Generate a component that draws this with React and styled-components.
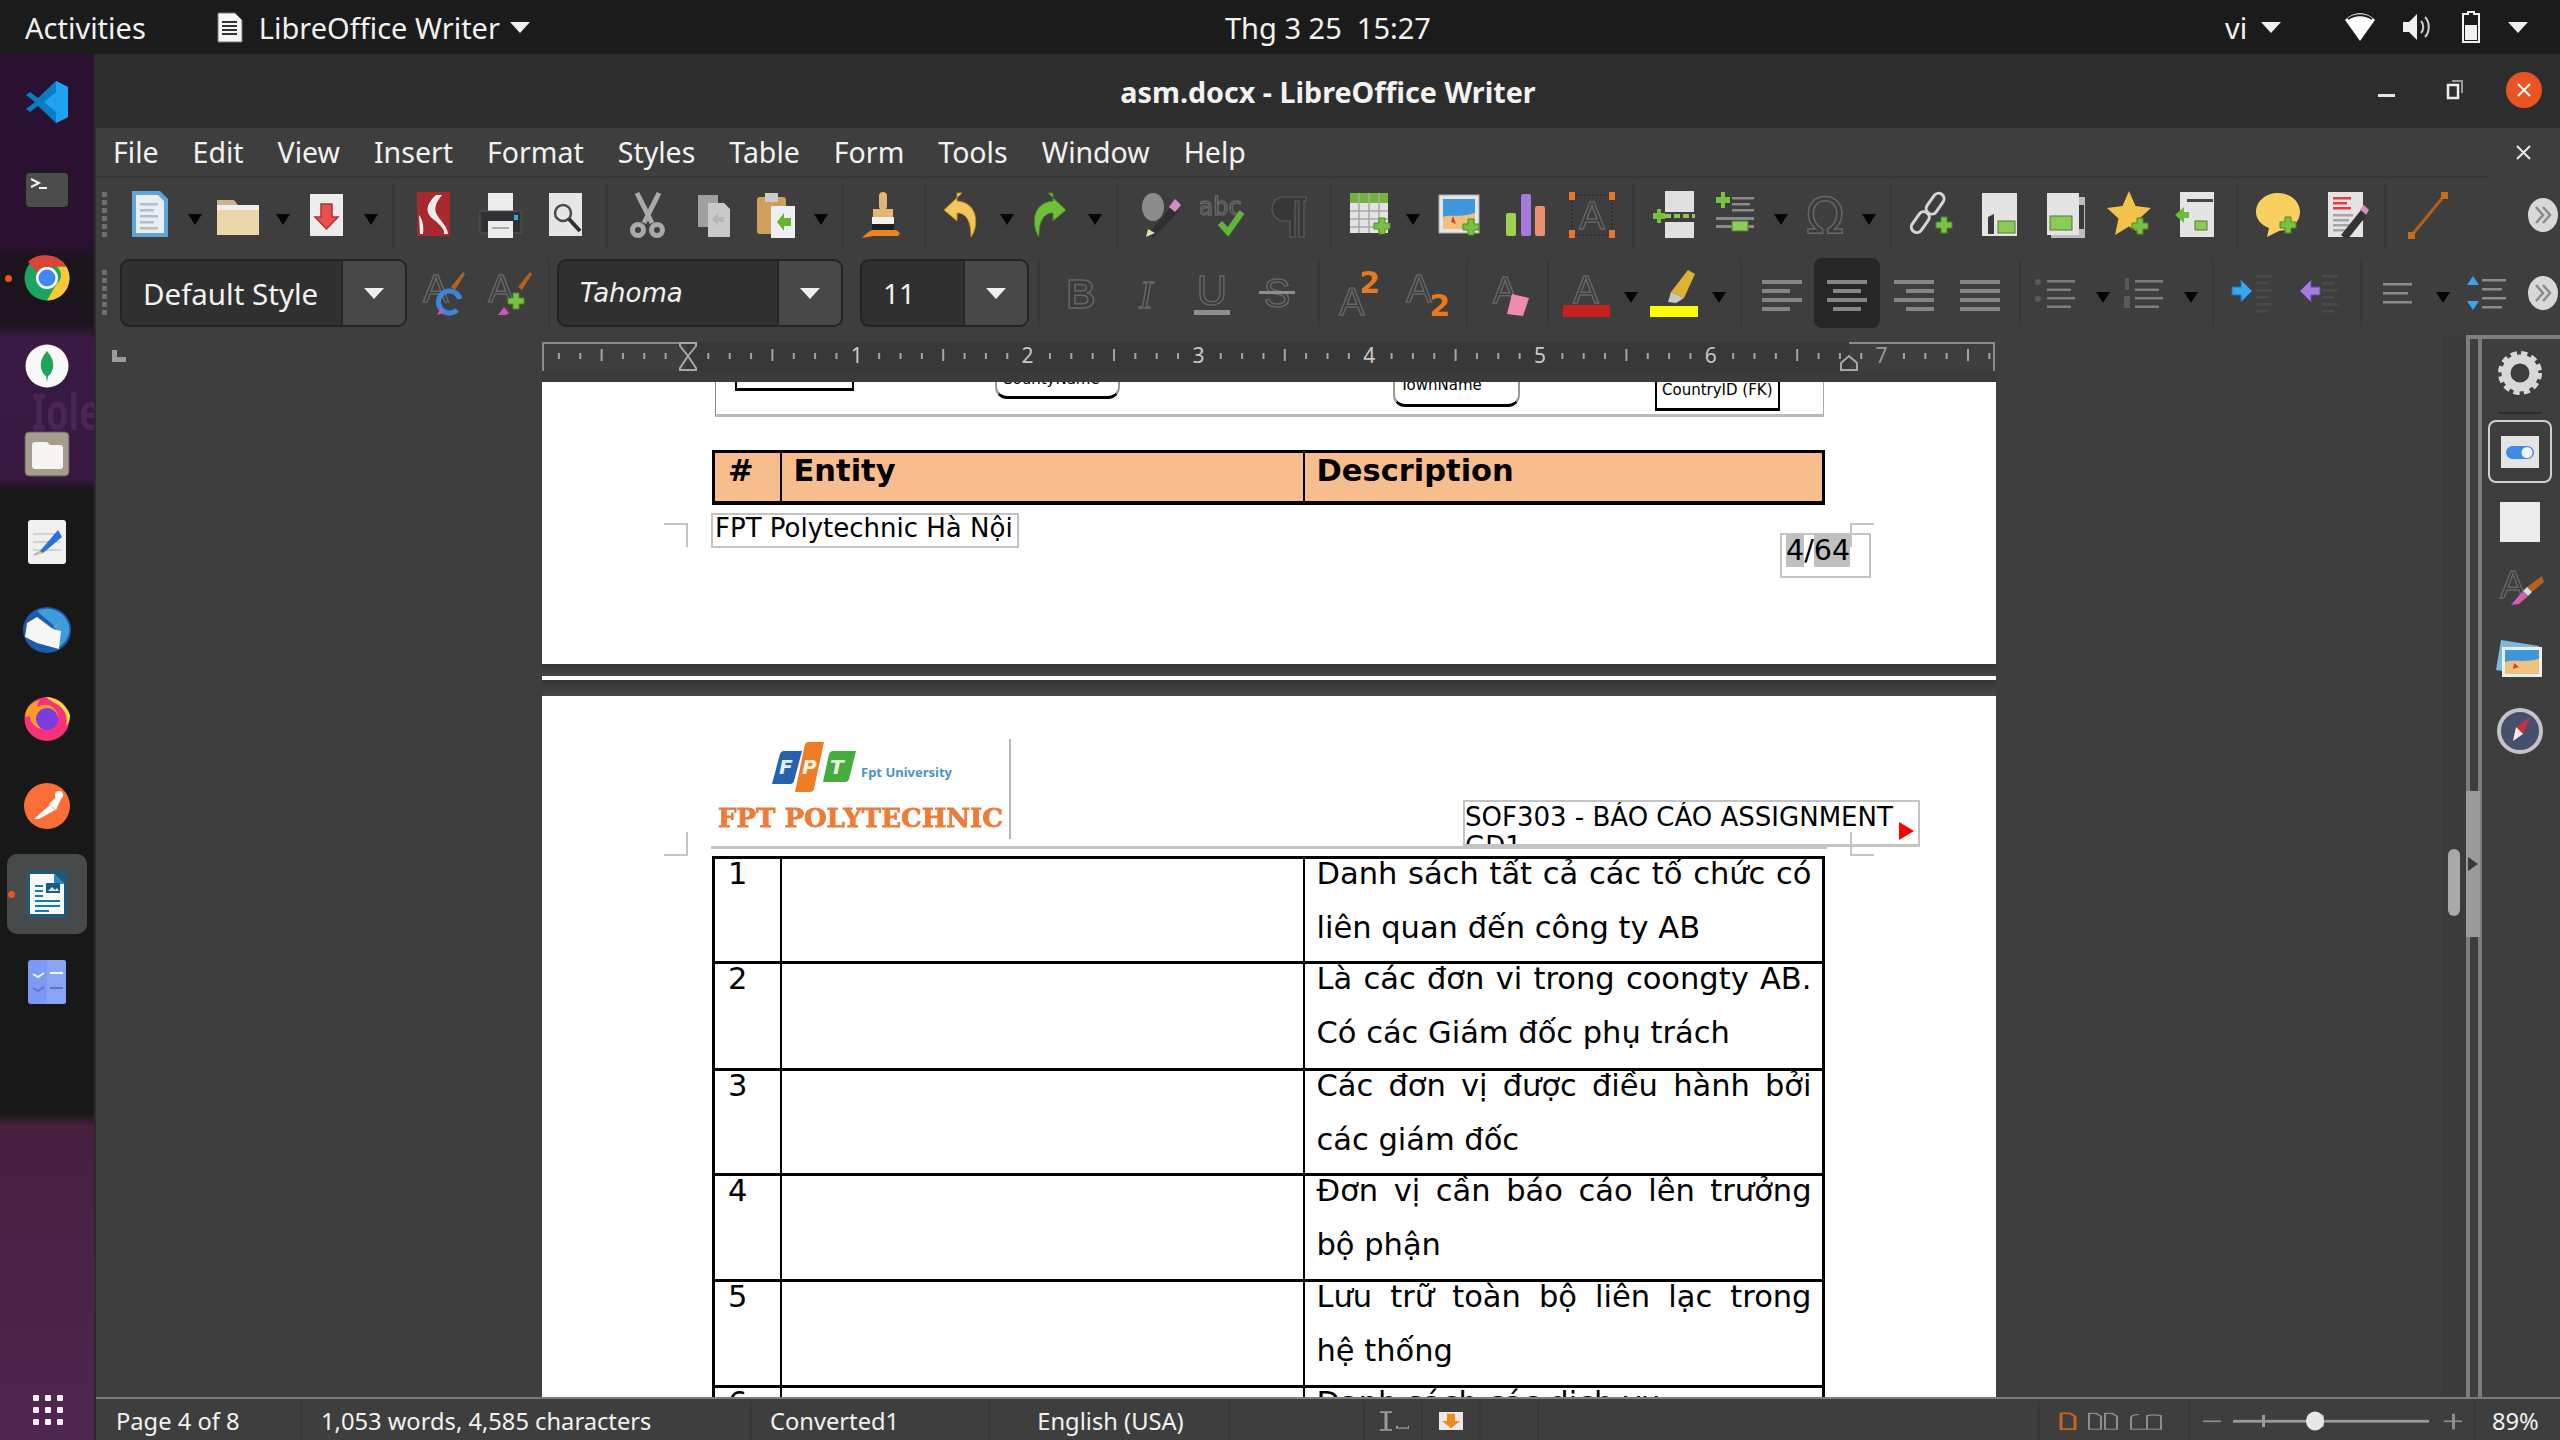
import React from "react";
import styled, { createGlobalStyle } from "styled-components";

const UI = `"Noto Sans", "Open Sans", sans-serif`;
const DOC = `"DejaVu Sans", sans-serif`;
const ARIAL = `"Liberation Sans", sans-serif`;

const Global = createGlobalStyle`
  html, body { margin: 0; padding: 0; background: #1b1b1b; }
  * { box-sizing: border-box; }
`;

const Screen = styled.div`
  width: 2560px;
  height: 1440px;
  display: flex;
  flex-direction: column;
  overflow: hidden;
  font-family: ${UI};
  color: #f2f2f2;
`;

/* gnome top bar */
const TopBar = styled.header`
  height: 54px;
  flex: none;
  background: #1b1b1b;
  display: flex;
  align-items: center;
  position: relative;
  font-size: 29px;
  padding-left: 25px;
`;
const TopText = styled.span`
  margin-left: ${(p) => p.$ml || 0}px;
  white-space: nowrap;
`;
const Clock = styled.span`
  position: absolute;
  left: 1225px;
  white-space: pre;
`;
const Tri = styled.i`
  display: block;
  flex: none;
  margin-left: ${(p) => p.$ml || 0}px;
  border-left: ${(p) => p.$s || 10}px solid transparent;
  border-right: ${(p) => p.$s || 10}px solid transparent;
  border-top: ${(p) => (p.$s || 10) + 1}px solid ${(p) => p.$c || "#f0f0f0"};
`;
const TraySvg = styled.svg`
  flex: none;
  margin-left: ${(p) => p.$ml || 0}px;
  margin-top: ${(p) => p.$mt || 0}px;
`;

const Desktop = styled.div`
  flex: 1;
  display: flex;
  min-height: 0;
`;

/* launcher */
const Dock = styled.nav`
  width: 96px;
  flex: none;
  position: relative;
  overflow: hidden;
  border-right: 2px solid #2a2a2a;
  background: linear-gradient(
    180deg,
    #2b1131 0,
    #2b1131 190px,
    #1c141c 205px,
    #1c141c 270px,
    #3a1a44 285px,
    #361840 425px,
    #181818 436px,
    #181818 1060px,
    #47203f 1072px,
    #4f2650 1386px
  );
  display: flex;
  flex-direction: column;
  align-items: center;
  padding-top: 8px;
`;
const DockWatermark = styled.span`
  position: absolute;
  left: 32px;
  top: 332px;
  font-size: 50px;
  line-height: 50px;
  font-weight: 700;
  color: rgba(130, 80, 140, 0.24);
  transform: scaleX(0.72);
  transform-origin: left center;
`;
const DockItem = styled.div`
  width: 80px;
  height: 80px;
  margin-bottom: 8px;
  flex: none;
  display: flex;
  align-items: center;
  justify-content: center;
  border-radius: 10px;
  position: relative;
  background: ${(p) => (p.$active ? "#474a4a" : "transparent")};
`;
const RunDot = styled.b`
  position: absolute;
  left: ${(p) => p.$x || -2}px;
  top: 37px;
  width: 7px;
  height: 7px;
  border-radius: 50%;
  background: #e95420;
`;
const AppsGrid = styled.div`
  position: absolute;
  left: 33px;
  bottom: 15px;
  width: 30px;
  display: grid;
  grid-template-columns: repeat(3, 6px);
  gap: 6px;
  span {
    width: 6px;
    height: 6px;
    border-radius: 1px;
    background: #f4f0f4;
  }
`;

const Win = styled.main`
  flex: 1;
  min-width: 0;
  display: flex;
  flex-direction: column;
  background: #3e3e3e;
`;
const TitleBar = styled.div`
  height: 74px;
  flex: none;
  background: #2d2d2d;
  position: relative;
  display: flex;
  align-items: center;
  justify-content: center;
  font-weight: 700;
  font-size: 28.7px;
`;
const WinButtons = styled.div`
  position: absolute;
  right: 18px;
  top: 18px;
  display: flex;
  align-items: center;
`;
const CloseBtn = styled.div`
  width: 36px;
  height: 36px;
  margin-left: 42px;
  border-radius: 50%;
  background: #e95420;
  display: flex;
  align-items: center;
  justify-content: center;
`;
const MenuBar = styled.div`
  height: 50px;
  flex: none;
  display: flex;
  align-items: center;
  padding: 0 0 2px 17px;
  font-size: 28.5px;
  background: #3e3e3e;
  position: relative;
  &::after {
    content: "";
    position: absolute;
    left: 0;
    right: 72px;
    bottom: 0;
    height: 2px;
    background: #363636;
  }
`;
const MenuItem = styled.span`
  margin-right: 34px;
  white-space: nowrap;
`;
const MenuClose = styled.svg`
  position: absolute;
  right: 29px;
  top: 17px;
`;

const Toolbar = styled.div`
  height: ${(p) => p.$h}px;
  flex: none;
  display: flex;
  align-items: center;
  padding: 0 2px ${(p) => p.$pb}px 6px;
`;
const Grip = styled.div`
  width: 5px;
  height: 46px;
  flex: none;
  background: repeating-linear-gradient(180deg, #6e6e6e 0 5px, transparent 5px 8px);
`;
const ToolSep = styled.div`
  width: 2px;
  height: 66px;
  flex: none;
  background: #383838;
  margin-left: ${(p) => p.$gap}px;
`;
const ToolArrow = styled(Tri)`
  border-left-width: 7px;
  border-right-width: 7px;
  border-top-width: 11px;
  border-top-color: #050505;
  margin-top: 8px;
  margin-left: ${(p) => p.$gap}px;
`;
const ToolIcon = styled.svg`
  width: 48px;
  height: 48px;
  flex: none;
  margin-left: ${(p) => p.$gap}px;
  filter: blur(0.4px);
`;
const ActiveTool = styled.div`
  width: 66px;
  height: 70px;
  flex: none;
  margin-left: ${(p) => p.$gap}px;
  background: #262626;
  border-radius: 8px;
  display: flex;
  align-items: center;
  justify-content: center;
`;
const MoreBtn = styled.svg`
  margin-left: auto;
  flex: none;
`;
const Combo = styled.div`
  width: ${(p) => p.$w}px;
  height: 68px;
  flex: none;
  margin-left: ${(p) => p.$gap}px;
  display: flex;
  background: #303030;
  border: 2px solid #232323;
  border-radius: 9px;
  overflow: hidden;
`;
const ComboText = styled.div`
  flex: 1;
  display: flex;
  align-items: center;
  padding-left: 21px;
  font-size: ${(p) => p.$size || 29.5}px;
  font-style: ${(p) => (p.$italic ? "italic" : "normal")};
  font-family: ${(p) => (p.$italic ? DOC : UI)};
  white-space: nowrap;
`;
const ComboBtn = styled.div`
  width: 64px;
  flex: none;
  background: #484848;
  border-left: 2px solid #262626;
  display: flex;
  align-items: center;
  justify-content: center;
`;

const Body = styled.div`
  flex: 1;
  min-height: 0;
  display: flex;
`;
const Workspace = styled.section`
  flex: 1;
  min-width: 0;
  display: flex;
  flex-direction: column;
  align-items: center;
  overflow: hidden;
  padding-top: 7px;
  position: relative;
`;
const TabMark = styled.div`
  position: absolute;
  left: 16px;
  top: 15px;
  width: 14px;
  height: 12px;
  border-left: 5px solid #9c9c9c;
  border-bottom: 5px solid #9c9c9c;
`;
const RulerSvg = styled.svg`
  flex: none;
  display: block;
`;
const RulerGap = styled.div`
  height: 11px;
  flex: none;
  width: 1454px;
  background: #3a3a3a;
`;
const Sheet = styled.article`
  width: 1454px;
  flex: none;
  position: relative;
  background: #fff;
  color: #000;
  font-family: ${DOC};
  overflow: hidden;
`;
const FirstSheet = styled(Sheet)`
  height: 282px;
`;
const SecondSheet = styled(Sheet)`
  flex: 1;
  min-height: 0;
`;
const PageGap = styled.div`
  width: 1454px;
  height: ${(p) => p.$h}px;
  flex: none;
  background: ${(p) => (p.$white ? "#fff" : "linear-gradient(180deg,#353535,#474747)")};
`;
const DiagramFrame = styled.div`
  margin-left: 173px;
  width: 1109px;
  height: 35px;
  border-left: 1px solid #888;
  border-right: 1px solid #aaa;
  border-bottom: 3px solid #bbb;
  display: flex;
  align-items: flex-start;
  font-size: 15px;
  padding-left: 19px;
`;
const Entity = styled.div`
  width: ${(p) => p.$w}px;
  height: ${(p) => p.$h}px;
  flex: none;
  margin-left: ${(p) => p.$ml || 0}px;
  border: 2px solid ${(p) => (p.$soft ? "#999" : "#000")};
  border-top: 0;
  border-bottom: 3px solid #000;
  border-radius: ${(p) => (p.$soft ? "0 0 12px 12px" : "0")};
  display: flex;
  align-items: flex-end;
  padding: 0 0 ${(p) => p.$pb || 0}px 5px;
  line-height: 16px;
  white-space: nowrap;
`;
const DocTable = styled.table`
  width: 1113px;
  margin-left: 170px;
  margin-top: ${(p) => p.$mt}px;
  border-collapse: collapse;
  table-layout: fixed;
  font-size: 30.5px;
  td {
    border-left: 2px solid #000;
    border-right: 2px solid #000;
    padding: 0;
    vertical-align: top;
  }
  td:first-child {
    border-left-width: 3px;
    padding-left: 13px;
    line-height: 30px;
  }
  td:last-child {
    border-right-width: 3px;
  }
`;
const HeadRow = styled.tr`
  height: 51px;
  background: #f8bd8d;
  border-top: 3px solid #000;
  border-bottom: 4px solid #000;
  font-weight: 700;
  td {
    line-height: 30px;
    padding: 3px 0 0 12px;
  }
  td:first-child {
    padding-left: 13px;
  }
`;
const DataRow = styled.tr`
  height: ${(p) => p.$h}px;
  border-top: 3px solid #000;
`;
const Desc = styled.div`
  width: 495px;
  margin-left: 12px;
  line-height: 54px;
  margin-top: -12px;
  text-align: justify;
`;
const FootRow = styled.div`
  display: flex;
  justify-content: space-between;
  align-items: flex-start;
  margin: 8px 125px 0 169px;
`;
const FootBox = styled.div`
  height: 35px;
  padding: 0 4px 0 2px;
  border: 2px solid #c4c4c4;
  font-size: 26px;
  line-height: 27px;
  white-space: nowrap;
`;
const PageNoBox = styled.div`
  width: 91px;
  height: 45px;
  margin-top: 20px;
  padding-left: 4px;
  border: 2px solid #c4c4c4;
  font-size: 28.5px;
  line-height: 32px;
  white-space: nowrap;
  span {
    background: #c0c0c0;
  }
`;
const Crop = styled.i`
  position: absolute;
  width: 24px;
  height: 24px;
  left: ${(p) => p.$x}px;
  top: ${(p) => p.$y}px;
  border-style: solid;
  border-color: #c4c4c4;
  border-width: ${(p) => p.$b};
`;
const PageHead = styled.div`
  height: 153px;
  width: 1116px;
  margin-left: 169px;
  padding-top: 44px;
  border-bottom: 3px solid #c4c4c4;
  display: flex;
  align-items: flex-end;
  position: relative;
`;
const LogoBox = styled.div`
  width: 300px;
  height: 100px;
  margin-bottom: 7px;
  border-right: 2px solid #b8b8b8;
  flex: none;
  display: flex;
  flex-direction: column;
`;
const LogoMark = styled.svg`
  flex: none;
  margin: 2px 0 0 56px;
`;
const LogoWord = styled.div`
  font-family: "DejaVu Serif", serif;
  font-weight: 700;
  font-size: 26px;
  line-height: 30px;
  margin: 4px 0 0 7px;
  color: #ee7b38;
  -webkit-text-stroke: 0.8px #ee7b38;
  white-space: nowrap;
  filter: blur(0.5px);
`;
const HeadBox = styled.div`
  position: absolute;
  left: 752px;
  top: 104px;
  width: 457px;
  height: 47px;
  padding-top: 1px;
  border: 2px solid #c4c4c4;
  border-bottom-width: 3px;
  font-size: 26px;
  line-height: 29px;
  overflow: hidden;
`;
const MoreMark = styled.i`
  position: absolute;
  right: 4px;
  top: 20px;
  border-top: 9px solid transparent;
  border-bottom: 9px solid transparent;
  border-left: 15px solid #f00;
`;

const ScrollStrip = styled.div`
  width: 24px;
  flex: none;
  background: #3b3b3b;
  padding: 514px 0 0 6px;
`;
const Thumb = styled.div`
  width: 12px;
  height: 67px;
  border-radius: 6px;
  background: #a9a9a9;
`;
const Deck = styled.aside`
  width: 94px;
  flex: none;
  position: relative;
  border-top: 4px solid #7e7e7e;
  border-left: 4px solid #7e7e7e;
  padding-left: 8px;
  display: flex;
`;
const DeckColumn = styled.div`
  flex: 1;
  border-left: 4px solid #7e7e7e;
  display: flex;
  flex-direction: column;
  align-items: center;
  padding: 12px 2px 0 0;
`;
const DeckIcon = styled.svg`
  flex: none;
  margin-top: ${(p) => p.$mt || 0}px;
  filter: blur(0.4px);
`;
const DeckRule = styled.div`
  width: 44px;
  height: 2px;
  flex: none;
  margin-top: 17px;
  background: #2c2c2c;
`;
const DeckSelected = styled.div`
  width: 64px;
  height: 63px;
  flex: none;
  margin-top: 6px;
  border: 2px solid #cfcfcf;
  border-radius: 8px;
  display: flex;
  align-items: center;
  justify-content: center;
`;
const Collapser = styled.div`
  position: absolute;
  left: -4px;
  top: 452px;
  width: 14px;
  height: 146px;
  background: #9b9b9b;
  display: flex;
  align-items: center;
  justify-content: center;
  &::after {
    content: "";
    border-top: 7px solid transparent;
    border-bottom: 7px solid transparent;
    border-left: 10px solid #3a3a3a;
  }
`;

const StatusBar = styled.footer`
  height: 43px;
  flex: none;
  border-top: 2px solid #7c7c7c;
  display: flex;
  font-size: 23.7px;
  padding-top: 2px;
`;
const StatusCell = styled.div`
  width: ${(p) => p.$w}px;
  flex: none;
  display: flex;
  align-items: center;
  justify-content: ${(p) => (p.$center ? "center" : "flex-start")};
  padding-left: ${(p) => p.$pl || 0}px;
  border-right: 2px solid ${(p) => (p.$nosep ? "transparent" : "#383838")};
  white-space: nowrap;
`;

const Plus = ({ x = 30, y = 30 }) => (
  <path
    d={`M${x + 5} ${y}h6v5h5v6h-5v5h-6v-5h-5v-6h5z`}
    fill="#7ac143"
    stroke="#4d8a22"
    strokeWidth="1"
  />
);
const Lines = ({ x, y, n = 5, w = 20, c = "#bdbdbd", step = 6 }) => (
  <>
    {Array.from({ length: n }).map((_, i) => (
      <rect key={i} x={x} y={y + i * step} width={i % 2 ? w - 4 : w} height="2.5" fill={c} />
    ))}
  </>
);
const Glyph = ({ t, x = 24, y = 40, s = 38, c = "#3b3b3b", st = "#666", it, fam = DOC, w = 400 }) => (
  <text
    x={x}
    y={y}
    fontSize={s}
    fontFamily={fam}
    fontStyle={it ? "italic" : "normal"}
    fontWeight={w}
    textAnchor="middle"
    fill={c}
    stroke={st}
    strokeWidth="1.5"
  >
    {t}
  </text>
);
const AlignBars = ({ mode }) => {
  const rows = [40, 28, 40, 28];
  return (
    <>
      {rows.map((w, i) => {
        const full = mode === "justify" ? 40 : w;
        const x = mode === "left" ? 4 : mode === "right" ? 44 - full : mode === "center" ? 24 - full / 2 : 4;
        return <rect key={i} x={x} y={11 + i * 9} width={full} height="4" fill="#858585" />;
      })}
    </>
  );
};

const ICONS = {
  newdoc: (
    <>
      <path d="M6 0h28l8 8v38H6z" fill="#5fa5dc" />
      <path d="M10 4h22l6 6v32H10z" fill="#e9eef2" />
      <Lines x={14} y={12} n={5} w={18} c="#b6bcc2" />
    </>
  ),
  open: (
    <>
      <path d="M3 9h17l4 5h21v30H3z" fill="#c9b48f" />
      <rect x="3" y="14" width="42" height="5" fill="#f2f0ea" />
      <path d="M3 19h42v25H3z" fill="#ecd6ac" />
    </>
  ),
  save: (
    <>
      <rect x="8" y="3" width="33" height="42" fill="#ececec" />
      <path d="M19 13h11v13h6L24.500 38 13 26h6z" fill="#e4534f" stroke="#b03030" strokeWidth="1.500" />
    </>
  ),
  pdf: (
    <>
      <rect x="8" y="1" width="33" height="44" fill="#a8282d" />
      <path d="M27 4c-9 8-12 17-3 24s12 12 11 15h4C38 34 31 30 27 22c-2-6 1-12 6-18z" fill="#ededed" />
      <path d="M10 24c3 3 5 10 4 19h-3z" fill="#ededed" />
    </>
  ),
  printer: (
    <>
      <rect x="12" y="2" width="25" height="18" fill="#ececec" />
      <path d="M4 20h41v22H4z" fill="#2e3033" stroke="#555" />
      <rect x="12" y="30" width="25" height="17" fill="#ececec" />
      <rect x="16" y="36" width="17" height="2" fill="#aaa" />
      <rect x="38" y="24" width="4" height="5" fill="#39a7e0" />
    </>
  ),
  preview: (
    <>
      <rect x="7" y="2" width="33" height="43" fill="#e6e6e6" />
      <circle cx="21" cy="22" r="8" fill="none" stroke="#4a4a4a" strokeWidth="2.500" />
      <path d="M27 28l11 12" stroke="#2f2f2f" strokeWidth="4" />
    </>
  ),
  cut: (
    <g fill="none" stroke="#a9a9a9" strokeWidth="5">
      <path d="M13 2l15 30M35 2L20 32" />
      <circle cx="14" cy="39" r="5.500" />
      <circle cx="33" cy="39" r="5.500" />
    </g>
  ),
  copy: (
    <>
      <path d="M8 4h20v32H8z" fill="#a0a0a0" />
      <path d="M18 12h16l6 6v28H18z" fill="#c9c9c9" />
      <path d="M22 28l6-6v4h6v5h-6v4z" fill="#b5b5b5" />
    </>
  ),
  paste: (
    <>
      <rect x="6" y="6" width="29" height="37" rx="3" fill="#cfa05c" />
      <rect x="14" y="2" width="13" height="9" fill="#ccc" />
      <rect x="20" y="15" width="24" height="32" fill="#efefef" />
      <path d="M26 31l7-9v5h7v8h-7v5z" fill="#65b32e" />
    </>
  ),
  brush: (
    <>
      <rect x="20" y="1" width="8" height="18" rx="4" fill="#e2b774" />
      <rect x="14" y="18" width="20" height="8" fill="#e2b774" />
      <rect x="13" y="26" width="22" height="7" fill="#f2f2f2" />
      <path d="M13 33h22v6H13z" fill="#1e1e1e" />
      <path d="M3 47c3-3 7-8 12-8h22l4 3-2 3H14z" fill="#e8851e" />
    </>
  ),
  undo: (
    <path
      d="M20 1L2 18l13 11v-8c8 0 14 6 14 24 7-9 9-34-14-36V1z"
      fill="#f4c75a"
      stroke="#b98b22"
      transform="translate(3 1)"
    />
  ),
  redo: (
    <path
      d="M28 1l18 17-13 11v-8c-8 0-14 6-14 24-7-9-9-34 14-36V1z"
      fill="#6fbf3a"
      stroke="#417f1a"
      transform="translate(-3 1)"
    />
  ),
  find: (
    <>
      <ellipse cx="16" cy="16" rx="11" ry="14" fill="#8c8c8c" />
      <path d="M10 44l24-28 7 5-24 25z" fill="#2f2f2f" />
      <path d="M32 16l6-8 6 6-6 7z" fill="#d88bc4" />
      <path d="M9 46l2-8 7 4z" fill="#e4df9a" />
    </>
  ),
  spell: (
    <>
      <Glyph t="abc" x={20} y={24} s={24} />
      <path d="M20 32l8 9 14-20" fill="none" stroke="#5fb535" strokeWidth="6" />
    </>
  ),
  pilcrow: (
    <path
      d="M40 6H18a11 11 0 000 24h6v16h5V10h4v36h5V10h2z"
      fill="#373737"
      stroke="#555"
      strokeWidth="1.500"
    />
  ),
  table: (
    <>
      <rect x="4" y="2" width="38" height="40" fill="#e4e4e4" />
      <rect x="4" y="2" width="38" height="10" fill="#75b43a" />
      <g stroke="#a8a8a8" strokeWidth="1.500">
        <path d="M13 2v40M23 2v40M33 2v40M4 20h38M4 28h38M4 36h38" />
      </g>
      <Plus x={28} y={27} />
    </>
  ),
  image: (
    <>
      <rect x="3" y="4" width="40" height="38" fill="#e6e6e6" stroke="#aaa" />
      <rect x="7" y="8" width="32" height="30" fill="#3d97da" />
      <path d="M7 26c8-3 16 1 32-4v16H7z" fill="#eec27d" />
      <path d="M17 25l3 8-5-2z" fill="#d8432b" />
      <Plus x={27} y={28} />
    </>
  ),
  chart: (
    <>
      <rect x="4" y="22" width="10" height="23" rx="2" fill="#9ed24f" />
      <rect x="19" y="3" width="10" height="42" rx="2" fill="#a57ad8" />
      <rect x="33" y="15" width="10" height="30" rx="2" fill="#ec9072" />
    </>
  ),
  textbox: (
    <>
      <rect x="4" y="4" width="40" height="40" fill="none" stroke="#2e2e2e" strokeDasharray="2 2" strokeWidth="2" />
      <Glyph t="A" x={24} y={38} s={38} />
      <g fill="#e8762a">
        <rect x="1" y="1" width="6" height="8" />
        <rect x="41" y="1" width="6" height="8" />
        <rect x="1" y="39" width="6" height="8" />
        <rect x="41" y="39" width="6" height="8" />
      </g>
    </>
  ),
  pagebreak: (
    <>
      <rect x="16" y="0" width="29" height="21" fill="#e0e0e0" />
      <rect x="16" y="31" width="29" height="16" fill="#e0e0e0" />
      <path d="M16 25h30" stroke="#8cc657" strokeWidth="4" strokeDasharray="6 3" />
      <path d="M4 22h4v-4h4v4h4v6h-4v4H8v-4H4z" fill="#7ac143" />
    </>
  ),
  field: (
    <>
      <path d="M9 1h4v5h5v6h-5v5H9v-5H4V6h5z" fill="#7ac143" />
      <Lines x={20} y={6} n={3} w={22} c="#8a8a8a" />
      <rect x="4" y="26" width="38" height="3" fill="#8a8a8a" />
      <rect x="4" y="34" width="38" height="3" fill="#8a8a8a" />
      <rect x="20" y="30" width="16" height="10" fill="#8ccb5a" stroke="#4c7c28" />
    </>
  ),
  omega: <Glyph t="Ω" x={24} y={42} s={50} />,
  link: (
    <>
      <g fill="none" stroke="#d6d6d6" strokeWidth="3">
        <rect x="20" y="1" width="11" height="23" rx="5.500" transform="rotate(35 25 12)" />
        <rect x="5" y="20" width="11" height="23" rx="5.500" transform="rotate(35 11 31)" />
      </g>
      <Plus x={26} y={26} />
    </>
  ),
  footnote: (
    <>
      <rect x="7" y="2" width="35" height="43" fill="#e4e4e4" />
      <path d="M13 26l6-3v20h-6z" fill="#3a3a3a" />
      <rect x="23" y="30" width="17" height="12" fill="#8ccb5a" stroke="#4c7c28" />
    </>
  ),
  endnote: (
    <>
      <rect x="10" y="6" width="34" height="41" fill="#bcbcbc" />
      <rect x="6" y="2" width="32" height="42" fill="#e4e4e4" />
      <rect x="38" y="14" width="5" height="24" fill="#3a3a3a" />
      <rect x="9" y="25" width="22" height="14" fill="#8ccb5a" stroke="#4c7c28" />
    </>
  ),
  bookmark: (
    <>
      <path d="M23 0l6.500 15 15.500 2-11.500 10.500L37 44l-14-8.500L9 44l3.500-16.500L1 17l15.500-2z" fill="#f2c24b" />
      <Plus x={26} y={27} />
    </>
  ),
  xref: (
    <>
      <rect x="9" y="1" width="34" height="45" fill="#e4e4e4" />
      <rect x="16" y="8" width="26" height="3" fill="#444" />
      <path d="M4 24l9-8v5h5v6h-5v5z" fill="#6fb93c" />
      <rect x="24" y="30" width="12" height="9" fill="#8ccb5a" stroke="#4c7c28" />
    </>
  ),
  comment: (
    <>
      <path d="M24 2c12 0 22 8 22 19S36 39 25 40l-12 6 2-9C7 34 2 28 2 21 2 10 12 2 24 2z" fill="#f8d060" />
      <Plus x={26} y={26} />
    </>
  ),
  track: (
    <>
      <rect x="6" y="1" width="35" height="45" fill="#e4e4e4" />
      <Lines x={11} y={6} n={3} w={18} c="#e33c3c" step={5} />
      <Lines x={11} y={23} n={4} w={20} c="#a5a5a5" step={5} />
      <path d="M19 44l20-25 6 5-20 25z" fill="#333" />
      <path d="M38 18l4-4 5 5-3 5z" fill="#d88bc4" />
    </>
  ),
  line: (
    <>
      <path d="M8 44L40 5" stroke="#b85e12" strokeWidth="3" />
      <rect x="4" y="41" width="7" height="7" fill="#cc6a15" />
      <rect x="37" y="1" width="7" height="7" fill="#cc6a15" />
    </>
  ),
  updateStyle: (
    <>
      <Glyph t="A" x={17} y={33} s={38} fam={ARIAL} />
      <path d="M44 3l2 2-10 16-4-3z" fill="#b4601e" />
      <path d="M41 30a11 11 0 10-3 11" fill="none" stroke="#3a86de" strokeWidth="5" />
      <path d="M18 46l4-7 3 5z" fill="#c957b7" />
    </>
  ),
  newStyle: (
    <>
      <Glyph t="A" x={17} y={33} s={38} fam={ARIAL} />
      <path d="M46 3l2 2-10 16-4-3z" fill="#b4601e" />
      <Plus x={24} y={24} />
      <path d="M14 46l6-8 5 6-3 2z" fill="#c957b7" />
    </>
  ),
  bold: <Glyph t="B" s={40} y={39} w={700} fam={ARIAL} />,
  italic: <Glyph t="I" s={40} y={39} it fam={`"Liberation Serif", serif`} />,
  underline: (
    <>
      <Glyph t="U" s={42} y={36} fam={ARIAL} />
      <rect x="6" y="41" width="36" height="5" fill="#8e8e8e" />
    </>
  ),
  strike: (
    <>
      <Glyph t="S" s={40} y={38} fam={ARIAL} />
      <rect x="6" y="22" width="36" height="3" fill="#8e8e8e" />
    </>
  ),
  sup: (
    <>
      <Glyph t="A" x={18} y={46} s={38} fam={ARIAL} />
      <text x={36} y={24} fontSize="30" fontWeight="700" fontFamily={DOC} textAnchor="middle" fill="#e8791c">
        2
      </text>
    </>
  ),
  sub: (
    <>
      <Glyph t="A" x={17} y={33} s={38} fam={ARIAL} />
      <text x={38} y={47} fontSize="30" fontWeight="700" fontFamily={DOC} textAnchor="middle" fill="#e8791c">
        2
      </text>
    </>
  ),
  clear: (
    <>
      <Glyph t="A" x={19} y={34} s={36} fam={ARIAL} />
      <path d="M26 25l17 4-6 18-16-2z" fill="#f08ab2" />
    </>
  ),
  fontColor: (
    <>
      <Glyph t="A" x={24} y={34} s={38} fam={ARIAL} />
      <rect x="1" y="36" width="47" height="12" fill="#c5201d" />
    </>
  ),
  highlight: (
    <>
      <path d="M38 1l7 4-11 24-13-6z" fill="#dcb22f" />
      <path d="M21 23l13 6-8 5-8-1z" fill="#c9c9c9" />
      <rect x="0" y="37" width="48" height="11" fill="#ffff00" />
    </>
  ),
  alignLeft: <AlignBars mode="left" />,
  alignCenter: <AlignBars mode="center" />,
  alignRight: <AlignBars mode="right" />,
  alignJustify: <AlignBars mode="justify" />,
  bullets: (
    <>
      <circle cx="5" cy="13" r="3" fill="#5a5a5a" />
      <circle cx="5" cy="30" r="3" fill="#5a5a5a" />
      <Lines x={14} y={11} n={4} w={28} c="#7d7d7d" step={8.5} />
    </>
  ),
  numbering: (
    <>
      <Lines x={14} y={11} n={4} w={28} c="#7d7d7d" step={8.5} />
      <rect x="4" y="9" width="4" height="12" fill="#5a5a5a" />
      <rect x="3" y="27" width="6" height="12" fill="#5a5a5a" />
    </>
  ),
  indentMore: (
    <>
      <Lines x={26} y={6} n={6} w={16} c="#4a4a4a" step={7} />
      <path d="M2 18h9v-7l11 11-11 11v-7H2z" fill="#3aa5ea" stroke="#2070b0" />
    </>
  ),
  indentLess: (
    <>
      <Lines x={26} y={6} n={6} w={16} c="#4a4a4a" step={7} />
      <path d="M24 18h-9v-7L4 22l11 11v-7h9z" fill="#a67ce0" stroke="#6b45a8" />
    </>
  ),
  lineSpacing: <Lines x={9} y={14} n={3} w={29} c="#8b8b8b" step={9} />,
  paraSpacing: (
    <>
      <Lines x={18} y={10} n={4} w={24} c="#8b8b8b" step={9} />
      <path d="M9 7l6 9H3z" fill="#3aa5ea" />
      <path d="M9 41l6-9H3z" fill="#3aa5ea" />
    </>
  ),
};

const Tool = ({ name, gap = 0 }) => (
  <ToolIcon viewBox="0 0 48 48" $gap={gap}>
    {ICONS[name]}
  </ToolIcon>
);

const More = () => (
  <MoreBtn width="30" height="36" viewBox="0 0 30 36">
    <ellipse cx="15" cy="18" rx="15" ry="17" fill="#d8d8d8" />
    <path d="M8 10l7 8-7 8M15 10l7 8-7 8" fill="none" stroke="#8a8a8a" strokeWidth="2.500" />
  </MoreBtn>
);

const row1 = [
  ["newdoc", 19], ["a", 14], ["open", 12], ["a", 14], ["save", 12], ["a", 14], ["s", 14],
  ["pdf", 15], ["printer", 19], ["preview", 18], ["s", 16], ["cut", 16], ["copy", 18],
  ["paste", 13], ["a", 15], ["s", 14], ["brush", 15], ["s", 17], ["undo", 13], ["a", 13],
  ["redo", 9], ["a", 17], ["s", 14], ["find", 19], ["spell", 15], ["pilcrow", 18], ["s", 16],
  ["table", 14], ["a", 12], ["image", 16], ["chart", 18], ["textbox", 18], ["s", 16],
  ["pagebreak", 15], ["field", 15], ["a", 14], ["omega", 13], ["a", 13], ["s", 14],
  ["link", 18], ["footnote", 17], ["endnote", 18], ["bookmark", 17], ["xref", 17], ["s", 17],
  ["comment", 16], ["track", 20], ["s", 14], ["line", 18],
];
const row2a = [["updateStyle", 12], ["newStyle", 17], ["s", 16]];
const row2b = [
  ["s", 9], ["bold", 17], ["italic", 17], ["underline", 18], ["strike", 17], ["s", 17],
  ["sup", 14], ["sub", 20], ["s", 16], ["clear", 18], ["s", 13], ["fontColor", 13], ["a", 14],
  ["highlight", 12], ["a", 14], ["s", 14], ["alignLeft", 16], ["active", 8], ["alignRight", 10],
  ["alignJustify", 18], ["s", 15], ["bullets", 12], ["a", 15], ["numbering", 11], ["a", 15],
  ["s", 14], ["indentMore", 16], ["indentLess", 18], ["s", 16], ["lineSpacing", 12], ["a", 14],
  ["paraSpacing", 14],
];

const renderTools = (items) =>
  items.map(([name, gap], i) => {
    if (name === "a") return <ToolArrow key={i} $gap={gap} />;
    if (name === "s") return <ToolSep key={i} $gap={gap} />;
    if (name === "active")
      return (
        <ActiveTool key={i} $gap={gap}>
          <Tool name="alignCenter" />
        </ActiveTool>
      );
    return <Tool key={i} name={name} gap={gap} />;
  });

const Ruler = () => {
  const ticks = [];
  for (let i = -6; i <= 62; i++) {
    const x = 144 + 21.35 * i;
    if (x < 6 || x > 1448) continue;
    if (i % 8 === 0) continue;
    const long = Math.abs(i % 8) === 4;
    ticks.push(<rect key={i} x={x} y={long ? 7 : 11} width="2" height={long ? 12 : 6} fill="#a5a5a5" />);
  }
  return (
    <RulerSvg width="1454" height="29" viewBox="0 0 1454 29">
      <rect x="144" y="0" width="1163" height="29" fill="#383838" />
      <path d="M1 29V1h144M1307 1h145v28" fill="none" stroke="#8a8a8a" strokeWidth="2" />
      {ticks}
      {[1, 2, 3, 4, 5, 6, 7].map((n) => (
        <text
          key={n}
          x={144 + 170.8 * n}
          y={21}
          fontSize="21"
          textAnchor="middle"
          fontFamily={UI}
          fill={n > 6 ? "#9a9a9a" : "#c8c8c8"}
        >
          {n}
        </text>
      ))}
      <path d="M138 1h16v3l-8 10 8 12v2h-16v-2l8-12-8-10z" fill="none" stroke="#a8a8a8" strokeWidth="2" />
      <path d="M1299 28v-7l8-7 8 7v7z" fill="none" stroke="#a8a8a8" strokeWidth="2" />
    </RulerSvg>
  );
};

const DockIcons = () => (
  <>
    <DockItem>
      <svg width="44" height="44" viewBox="0 0 44 44">
        <path d="M31 1l12 6v30l-12 6L13 26 5 32l-4-3 9-7-9-7 4-3 8 6z" fill="#0a7cc4" />
        <path d="M31 1l12 6v30l-12 6zM31 12L19 22l12 10z" fill="#1fa2ef" fillRule="evenodd" />
      </svg>
    </DockItem>
    <DockItem>
      <svg width="46" height="38" viewBox="0 0 46 38">
        <rect x="1" y="1" width="44" height="36" rx="5" fill="#4c4c4c" stroke="#1d1d1d" strokeWidth="2" />
        <path d="M7 8l8 4-8 4" fill="none" stroke="#f2f2f2" strokeWidth="2" />
        <rect x="15" y="16" width="8" height="2" fill="#f2f2f2" />
      </svg>
    </DockItem>
    <DockItem>
      <RunDot />
      <svg width="46" height="46" viewBox="0 0 46 46">
        <circle cx="23" cy="23" r="22.500" fill="#1da462" />
        <path d="M23 .5a22.500 22.500 0 0119.500 11.300H23a11 11 0 00-10 6L4 6.800A22.500 22.500 0 0123 .5z" fill="#db4437" />
        <path d="M42.500 11.800A22.500 22.500 0 0123 45.500L32.500 29A11 11 0 0033 11.800z" fill="#fcc934" />
        <circle cx="23" cy="23" r="11" fill="#fff" />
        <circle cx="23" cy="23" r="8.500" fill="#4285f4" />
      </svg>
    </DockItem>
    <DockItem>
      <svg width="44" height="44" viewBox="0 0 44 44">
        <circle cx="22" cy="22" r="21.500" fill="#f8f8f8" />
        <path d="M22 7c5 6 7 11 6 17-1 4-3 7-5 8l-1 6-1-6c-2-1-4-4-5-8-1-6 1-11 6-17z" fill="#1da659" />
      </svg>
    </DockItem>
    <DockItem>
      <svg width="46" height="46" viewBox="0 0 46 46">
        <rect x="1" y="1" width="44" height="44" rx="4" fill="#a49e8e" stroke="#5c584e" />
        <path d="M8 14a3 3 0 013-3h12l3 3h10a3 3 0 013 3v18a3 3 0 01-3 3H11a3 3 0 01-3-3z" fill="#f6f5f2" />
      </svg>
    </DockItem>
    <DockItem>
      <svg width="38" height="44" viewBox="0 0 38 44">
        <rect x="0" y="0" width="38" height="44" rx="3" fill="#f0f0f0" />
        <g stroke="#b5b5b5">
          <path d="M5 14h28M5 22h28M5 30h28" />
        </g>
        <path d="M5 35l7-4L30 10l4 7-19 16z" fill="#2d6fe0" />
        <path d="M4 37l8-6 3 2z" fill="#e6c28a" />
      </svg>
    </DockItem>
    <DockItem>
      <svg width="48" height="46" viewBox="0 0 48 46">
        <ellipse cx="24" cy="23" rx="24" ry="23" fill="#1e5aa8" />
        <path d="M14 4c12-6 28 0 32 14 2 10-4 20-14 24 4-8 4-18-2-24-5-5-10-8-16-14z" fill="#3f9cdc" />
        <path d="M4 16l10-6 16 12 8 2-2 18-22-6L2 30z" fill="#f6f6f6" />
        <path d="M14 10l16 12 8-8" fill="none" stroke="#9aa2aa" />
      </svg>
    </DockItem>
    <DockItem>
      <svg width="46" height="46" viewBox="0 0 46 46">
        <ellipse cx="23" cy="24" rx="22.500" ry="22" fill="#f5327a" />
        <path d="M1 22C2 10 10 6 16 5c-3 3-3 6-2 7 4-3 10-3 14 0 6 4 8 10 4 16-5 7-17 8-22 2-3-3-4-6-4-9z" fill="#ff9a28" />
        <path d="M22 2c8 0 20 6 24 18 0 4-1 8-4 11 2-8 0-16-8-21-4-3-9-5-12-8z" fill="#ffdb3e" />
        <circle cx="23" cy="24" r="11" fill="#7a3ddb" />
      </svg>
    </DockItem>
    <DockItem>
      <svg width="46" height="46" viewBox="0 0 46 46">
        <circle cx="23" cy="23" r="23" fill="#fb6f37" />
        <path d="M10 36l16-14 5 5-16 9z" fill="#fff" />
        <path d="M25 21l8-8 4 3-5 11z" fill="#fff" />
        <circle cx="35" cy="12" r="4" fill="#fff" />
      </svg>
    </DockItem>
    <DockItem $active>
      <RunDot $x={1} />
      <svg width="40" height="46" viewBox="0 0 40 46">
        <rect x="0" y="0" width="40" height="46" rx="4" fill="#1b5b82" />
        <path d="M3 3h24l10 10v30H3z" fill="#f9f9f9" />
        <path d="M27 3l10 10H27z" fill="#2f84bd" />
        <path d="M8 15h8M8 20h8M8 25h8M8 30h25M8 35h25M8 40h14" stroke="#1279bb" strokeWidth="2" />
        <rect x="19" y="12" width="14" height="10" fill="#1b5b82" />
        <path d="M21 20l4-4 3 3 2-2 2 3z" fill="#d7e7f2" />
      </svg>
    </DockItem>
    <DockItem>
      <svg width="38" height="44" viewBox="0 0 38 44">
        <rect x="0" y="0" width="38" height="44" rx="3" fill="#7c9af5" />
        <rect x="19" y="0" width="19" height="44" rx="3" fill="#89a5f6" />
        <path d="M5 14l5 3 6-4" fill="none" stroke="#f3f5ff" strokeWidth="2" />
        <path d="M5 28l5 3 6-4" fill="none" stroke="#5d74c4" strokeWidth="2" />
        <path d="M22 13h13" stroke="#f3f5ff" strokeWidth="2" />
        <path d="M22 28h13" stroke="#5d74c4" strokeWidth="2" />
      </svg>
    </DockItem>
  </>
);

const rows = [
  { n: 1, h: 105, t: "Danh sách tất cả các tố chức có liên quan đến công ty AB" },
  { n: 2, h: 107, t: "Là các đơn vi trong coongty AB. Có các Giám đốc phụ trách" },
  { n: 3, h: 105, t: "Các đơn vị được điều hành bởi các giám đốc" },
  { n: 4, h: 106, t: "Đơn vị cần báo cáo lên trưởng bộ phận" },
  { n: 5, h: 106, t: "Lưu trữ toàn bộ liên lạc trong hệ\u00a0thống" },
  { n: 6, h: 106, t: "Danh sách các dịch vụ" },
];

export default function App() {
  return (
    <Screen>
      <Global />
      <TopBar>
        <TopText>Activities</TopText>
        <TraySvg $ml={71} width="26" height="32" viewBox="0 0 26 32">
          <path d="M1 2h17l7 7v22H1z" fill="#f5f5f5" stroke="#777" />
          <path d="M5 11h15M5 15h15M5 19h15M5 23h15" stroke="#333" strokeWidth="2" />
        </TraySvg>
        <TopText $ml={16}>LibreOffice Writer</TopText>
        <Tri $ml={10} />
        <Clock>Thg 3 25  15:27</Clock>
        <TopText $ml={1695}>vi</TopText>
        <Tri $ml={14} />
        <TraySvg $ml={63} width="32" height="30" viewBox="0 0 32 30">
          <path d="M16 29L1 8c8-9 22-9 30 0z" fill="#fff" />
          <path d="M4 7c7-5 17-5 24 0" fill="none" stroke="#1b1b1b" strokeWidth="2" />
        </TraySvg>
        <TraySvg $ml={26} width="30" height="30" viewBox="0 0 30 30">
          <path d="M1 10h6l8-8v26l-8-8H1z" fill="#f0f0f0" />
          <path d="M19 9c3 3 3 9 0 12M23 5c5 5 5 15 0 20" fill="none" stroke="#d0d0d0" strokeWidth="2" />
        </TraySvg>
        <TraySvg $ml={29} width="20" height="32" viewBox="0 0 20 32">
          <path d="M7 1h6v2h5v28H2V3h5z" fill="none" stroke="#f0f0f0" strokeWidth="2" />
          <rect x="4" y="14" width="12" height="15" fill="#f0f0f0" />
        </TraySvg>
        <Tri $ml={27} />
      </TopBar>
      <Desktop>
        <Dock>
          <DockWatermark>Iole</DockWatermark>
          <DockIcons />
          <AppsGrid>
            {Array.from({ length: 9 }).map((_, i) => (
              <span key={i} />
            ))}
          </AppsGrid>
        </Dock>
        <Win>
          <TitleBar>
            asm.docx - LibreOffice Writer
            <WinButtons>
              <TraySvg $mt={12} width="18" height="4" viewBox="0 0 18 4">
                <rect width="17" height="3" fill="#e6e6e6" />
              </TraySvg>
              <TraySvg $ml={50} width="18" height="20" viewBox="0 0 18 20">
                <path d="M6 1h10v12" fill="none" stroke="#999" strokeWidth="2" />
                <rect x="2" y="5" width="10" height="13" fill="none" stroke="#eee" strokeWidth="2.500" />
              </TraySvg>
              <CloseBtn>
                <svg width="16" height="16" viewBox="0 0 16 16">
                  <path d="M2 2l12 12M14 2L2 14" stroke="#fff" strokeWidth="2" />
                </svg>
              </CloseBtn>
            </WinButtons>
          </TitleBar>
          <MenuBar>
            {["File", "Edit", "View", "Insert", "Format", "Styles", "Table", "Form", "Tools", "Window", "Help"].map(
              (m) => (
                <MenuItem key={m}>{m}</MenuItem>
              )
            )}
            <MenuClose width="15" height="15" viewBox="0 0 15 15">
              <path d="M1 1l13 13M14 1L1 14" stroke="#e8e8e8" strokeWidth="2" />
            </MenuClose>
          </MenuBar>
          <Toolbar $h={78} $pb={4}>
            <Grip />
            {renderTools(row1)}
            <More />
          </Toolbar>
          <Toolbar $h={79} $pb={5}>
            <Grip />
            <Combo $w={287} $gap={13}>
              <ComboText>Default Style</ComboText>
              <ComboBtn>
                <Tri />
              </ComboBtn>
            </Combo>
            {renderTools(row2a)}
            <Combo $w={286} $gap={7}>
              <ComboText $italic $size={26}>Tahoma</ComboText>
              <ComboBtn>
                <Tri />
              </ComboBtn>
            </Combo>
            <Combo $w={169} $gap={17}>
              <ComboText $size={28}>11</ComboText>
              <ComboBtn>
                <Tri />
              </ComboBtn>
            </Combo>
            {renderTools(row2b)}
            <More />
          </Toolbar>
          <Body>
            <Workspace>
              <TabMark />
              <Ruler />
              <RulerGap />
              <FirstSheet>
                <DiagramFrame>
                  <Entity $w={119} $h={9} />
                  <Entity $w={125} $h={17} $ml={141} $soft $pb={9}>
                    CountyName
                  </Entity>
                  <Entity $w={127} $h={25} $ml={273} $soft $pb={11}>
                    TownName
                  </Entity>
                  <Entity $w={125} $h={29} $ml={135} $pb={10}>
                    CountryID (FK)
                  </Entity>
                </DiagramFrame>
                <DocTable $mt={33}>
                  <colgroup>
                    <col width="67" />
                    <col width="523" />
                    <col />
                  </colgroup>
                  <tbody>
                    <HeadRow>
                      <td>#</td>
                      <td>Entity</td>
                      <td>Description</td>
                    </HeadRow>
                  </tbody>
                </DocTable>
                <FootRow>
                  <FootBox>FPT Polytechnic Hà Nội</FootBox>
                  <PageNoBox>
                    <span>4</span>/<span>64</span>
                  </PageNoBox>
                </FootRow>
                <Crop $x={122} $y={141} $b="2px 2px 0 0" />
                <Crop $x={1308} $y={141} $b="2px 0 0 2px" />
              </FirstSheet>
              <PageGap $h={12} />
              <PageGap $h={4} $white />
              <PageGap $h={16} />
              <SecondSheet>
                <PageHead>
                  <LogoBox>
                    <LogoMark width="240" height="58" viewBox="0 0 240 58">
                      <path d="M13 13q1-3 4-3h18l-8 30q-1 3-4 3H5z" fill="#2462ae" />
                      <path d="M38 3q1-2 4-2h15L47 48q-1 3-4 3H28z" fill="#ef7d25" />
                      <path d="M62 13q1-3 4-3h23l-7 28q-1 3-4 3H56z" fill="#46ac3d" />
                      <text x="12" y="33" fontSize="20" fontWeight="700" fontStyle="italic" fontFamily={DOC} fill="#e4f0fa">
                        F
                      </text>
                      <text x="35" y="33" fontSize="20" fontWeight="700" fontStyle="italic" fontFamily={DOC} fill="#fdeede">
                        P
                      </text>
                      <text x="63" y="33" fontSize="20" fontWeight="700" fontStyle="italic" fontFamily={DOC} fill="#eaf8e6">
                        T
                      </text>
                      <text x="94" y="36" fontSize="13" fontWeight="700" fontFamily={UI} fill="#4a94c4">
                        Fpt University
                      </text>
                    </LogoMark>
                    <LogoWord>FPT POLYTECHNIC</LogoWord>
                  </LogoBox>
                  <HeadBox>
                    SOF303 - BÁO CÁO ASSIGNMENT GD1
                    <MoreMark />
                  </HeadBox>
                </PageHead>
                <Crop $x={122} $y={136} $b="0 2px 2px 0" />
                <Crop $x={1308} $y={136} $b="0 0 2px 2px" />
                <DocTable $mt={7}>
                  <colgroup>
                    <col width="67" />
                    <col width="523" />
                    <col />
                  </colgroup>
                  <tbody>
                    {rows.map((r) => (
                      <DataRow key={r.n} $h={r.h}>
                        <td>{r.n}</td>
                        <td />
                        <td>
                          <Desc>{r.t}</Desc>
                        </td>
                      </DataRow>
                    ))}
                  </tbody>
                </DocTable>
              </SecondSheet>
            </Workspace>
            <ScrollStrip>
              <Thumb />
            </ScrollStrip>
            <Deck>
              <Collapser />
              <DeckColumn>
                <DeckIcon width="44" height="44" viewBox="0 0 44 44">
                  <circle cx="22" cy="22" r="14" fill="none" stroke="#d8d8d8" strokeWidth="9" />
                  <circle cx="22" cy="22" r="19" fill="none" stroke="#d8d8d8" strokeWidth="6" strokeDasharray="6 4" />
                </DeckIcon>
                <DeckRule />
                <DeckSelected>
                  <svg width="38" height="32" viewBox="0 0 38 32">
                    <rect width="38" height="32" fill="#e4e4e4" />
                    <rect x="5" y="10" width="28" height="13" rx="6.500" fill="#3f8ae4" />
                    <circle cx="26" cy="16.500" r="5.500" fill="#f2f2f2" />
                  </svg>
                </DeckSelected>
                <DeckIcon $mt={19} width="40" height="40" viewBox="0 0 40 40">
                  <rect width="40" height="40" fill="#ececec" />
                </DeckIcon>
                <DeckIcon $mt={24} width="48" height="48" viewBox="0 0 48 48">
                  <Glyph t="A" x={17} y={32} s={38} fam={ARIAL} />
                  <path d="M46 10l2 6-12 10-5-5z" fill="#b4601e" />
                  <path d="M31 21l5 5-4 4-5-5z" fill="#ddd" />
                  <path d="M27 25l5 5-9 8-8 1z" fill="#d05fb8" />
                </DeckIcon>
                <DeckIcon $mt={24} width="48" height="48" viewBox="0 0 48 48">
                  <path d="M5 2l38 6-5 30L0 32z" fill="#7cb9e0" />
                  <rect x="6" y="9" width="40" height="30" fill="#efefef" />
                  <rect x="9" y="12" width="34" height="24" fill="#3d97da" />
                  <path d="M9 24c10-3 18 1 34-3v15H9z" fill="#eec27d" />
                  <path d="M18 25l5 4-6 2z" fill="#d8432b" />
                </DeckIcon>
                <DeckIcon $mt={21} width="48" height="48" viewBox="0 0 48 48">
                  <circle cx="24" cy="24" r="21" fill="#44506e" stroke="#c4c4c4" strokeWidth="4" />
                  <path d="M34 10L27 27 17 34l3-14z" fill="#c8323c" />
                  <path d="M17 34l3-14 7 7z" fill="#eee" />
                </DeckIcon>
              </DeckColumn>
            </Deck>
          </Body>
          <StatusBar>
            <StatusCell $w={206} $pl={20}>Page 4 of 8</StatusCell>
            <StatusCell $w={450} $pl={19}>1,053 words, 4,585 characters</StatusCell>
            <StatusCell $w={238} $pl={18}>Converted1</StatusCell>
            <StatusCell $w={240} $center $pl={3}>English (USA)</StatusCell>
            <StatusCell $w={135} />
            <StatusCell $w={58} $center>
              <svg width="32" height="20" viewBox="0 0 32 34" preserveAspectRatio="none">
                <path d="M3 2h12M3 32h12M9 2v30" stroke="#9a9a9a" strokeWidth="3" />
                <path d="M20 25v4h12v-4" fill="none" stroke="#9a9a9a" strokeWidth="2" />
              </svg>
            </StatusCell>
            <StatusCell $w={58} $center>
              <svg width="24" height="18" viewBox="0 0 24 30" preserveAspectRatio="none">
                <rect width="24" height="30" fill="#e9e9e9" />
                <path d="M8 3h8v12h5L12 27 3 15h5z" fill="#ef8a1c" />
              </svg>
            </StatusCell>
            <StatusCell $w={58} />
            <StatusCell $w={501} />
            <StatusCell $w={150} $center>
              <svg width="110" height="20" viewBox="0 0 110 34" preserveAspectRatio="none">
                <path d="M2 4h9l5 5v22H2z" fill="none" stroke="#c7631a" strokeWidth="3" />
                <path d="M30 4h7l5 5v22H30zM46 4h7l5 5v22H46z" fill="none" stroke="#8e8e8e" strokeWidth="2" />
                <path d="M80 6c-6 0-8 3-8 6v19h16V8c4-2 8-2 14 0v23H88" fill="none" stroke="#8e8e8e" strokeWidth="2" />
              </svg>
            </StatusCell>
            <StatusCell $w={286} $center>
              <svg width="262" height="20" viewBox="0 0 262 36" preserveAspectRatio="none">
                <rect x="2" y="17" width="18" height="3" fill="#8e8e8e" />
                <rect x="32" y="16" width="196" height="5" fill="#9a9a9a" />
                <rect x="61" y="7" width="3" height="22" fill="#9a9a9a" />
                <rect x="120" y="7" width="3" height="22" fill="#9a9a9a" />
                <ellipse cx="114" cy="18" rx="9" ry="17" fill="#e8e8e8" />
                <rect x="243" y="17" width="18" height="3" fill="#8e8e8e" />
                <rect x="251" y="5" width="3" height="28" fill="#8e8e8e" />
              </svg>
            </StatusCell>
            <StatusCell $w={84} $pl={16} $nosep>89%</StatusCell>
          </StatusBar>
        </Win>
      </Desktop>
    </Screen>
  );
}
